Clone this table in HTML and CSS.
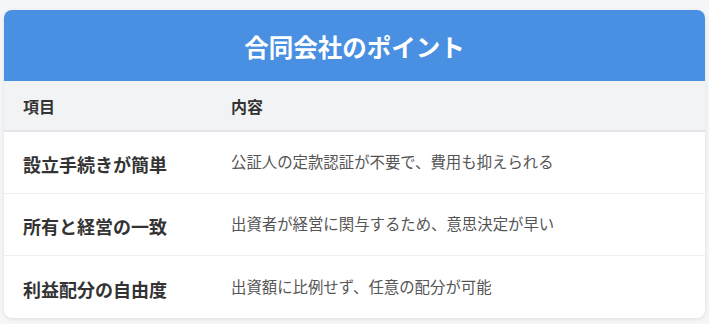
FILE: index.html
```html
<!DOCTYPE html>
<html lang="ja">
<head>
    <meta charset="UTF-8">
    <title>合同会社のポイント</title>
    <link rel="stylesheet" href="styles.css">
</head>
<body>
    <div class="card">
        <h1 class="card-title">合同会社のポイント</h1>
        <div class="points">
            <div class="row head">
                <div class="cell">項目</div>
                <div class="cell">内容</div>
            </div>
            <div class="row">
                <div class="cell name">設立手続きが簡単</div>
                <div class="cell desc">公証人の定款認証が不要で、費用も抑えられる</div>
            </div>
            <div class="row">
                <div class="cell name">所有と経営の一致</div>
                <div class="cell desc">出資者が経営に関与するため、意思決定が早い</div>
            </div>
            <div class="row">
                <div class="cell name">利益配分の自由度</div>
                <div class="cell desc">出資額に比例せず、任意の配分が可能</div>
            </div>
        </div>
    </div>
</body>
</html>
```

FILE: styles.css
```css
body {
    margin: 0;
    padding: 10px 4px;
    background: #f5f6f8;
    font-family: "Noto Sans CJK JP", "Noto Sans", sans-serif;
    color: #333;
}
.card {
    background: #fff;
    border-radius: 8px;
    box-shadow: 0 1px 4px rgba(0, 0, 0, 0.1);
    overflow: hidden;
}
.card-title {
    margin: 0;
    background: #4a90e2;
    color: #fff;
    text-align: center;
    font-size: 24.5px;
    line-height: 29px;
    padding: 22px 0 20px;
    font-weight: 700;
}
.row {
    display: grid;
    grid-template-columns: 208px 1fr;
    border-bottom: 1px solid #eceef0;
}
.row:last-child {
    border-bottom: none;
}
.cell {
    padding: 0 19px;
    display: flex;
    align-items: center;
}
.head {
    background: #f2f3f5;
    border-bottom: 2px solid #e3e5e8;
    height: 49px;
    font-size: 16px;
    font-weight: 700;
    color: #333;
}
.row:not(.head) {
    height: 61px;
}
.row:last-child {
    height: 62px;
}
.name {
    font-size: 18px;
    font-weight: 700;
    color: #333;
    padding-top: 3px;
}
.desc {
    font-size: 15.4px;
    color: #555;
    padding-bottom: 3px;
}
```
